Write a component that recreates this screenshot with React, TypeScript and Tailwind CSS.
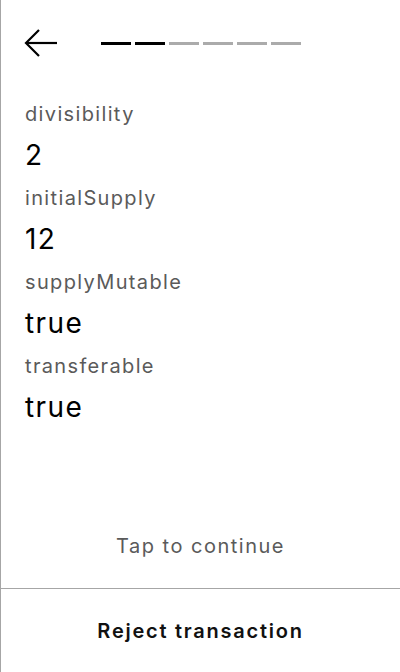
import React from 'react';

const fields = [
  { label: 'divisibility', value: '2' },
  { label: 'initialSupply', value: '12' },
  { label: 'supplyMutable', value: 'true' },
  { label: 'transferable', value: 'true' },
];

const STEPS = 6;
const CURRENT = 2;

export default function App() {
  return (
    <div
      className="w-[400px] h-[672px] flex flex-col bg-white border-l border-[#a6a6a6] text-black"
      style={{ fontFamily: 'Inter, "Noto Sans", sans-serif' }}
    >
      {/* header */}
      <div className="h-[86px] flex items-center pl-[23px]">
        <button className="w-[34px] h-[30px] flex items-center justify-center">
          <svg width="34" height="30" viewBox="0 0 34 30" fill="none" stroke="black" strokeWidth="2.2">
            <path d="M33 15H3" />
            <path d="M15 2L2 15l13 13" strokeLinejoin="miter" />
          </svg>
        </button>
        <div className="flex gap-[4px] ml-[43px]">
          {Array.from({ length: STEPS }).map((_, i) => (
            <div
              key={i}
              className={i < CURRENT ? 'w-[30px] h-[3px] bg-black' : 'w-[30px] h-[3px] bg-[#ababab]'}
            />
          ))}
        </div>
      </div>

      {/* fields */}
      <div className="flex flex-col px-6 pt-[14px]">
        {fields.map((f) => (
          <div key={f.label} className="flex flex-col">
            <span className="text-[20px] leading-[28px] tracking-[1.35px] text-[#5a5a5a]">{f.label}</span>
            <span className="text-[28px] leading-[54px] mb-[2px] tracking-[1.4px]">{f.value}</span>
          </div>
        ))}
      </div>

      {/* footer */}
      <div className="mt-auto flex flex-col">
        <div className="text-center text-[20px] leading-[28px] tracking-[1.5px] text-[#5a5a5a] pb-[28px]">
          Tap to continue
        </div>
        <div className="border-t border-[#a6a6a6] h-[84px] flex items-center justify-center">
          <span className="text-[20px] font-semibold tracking-[1.75px] text-[#111]">Reject transaction</span>
        </div>
      </div>
    </div>
  );
}
